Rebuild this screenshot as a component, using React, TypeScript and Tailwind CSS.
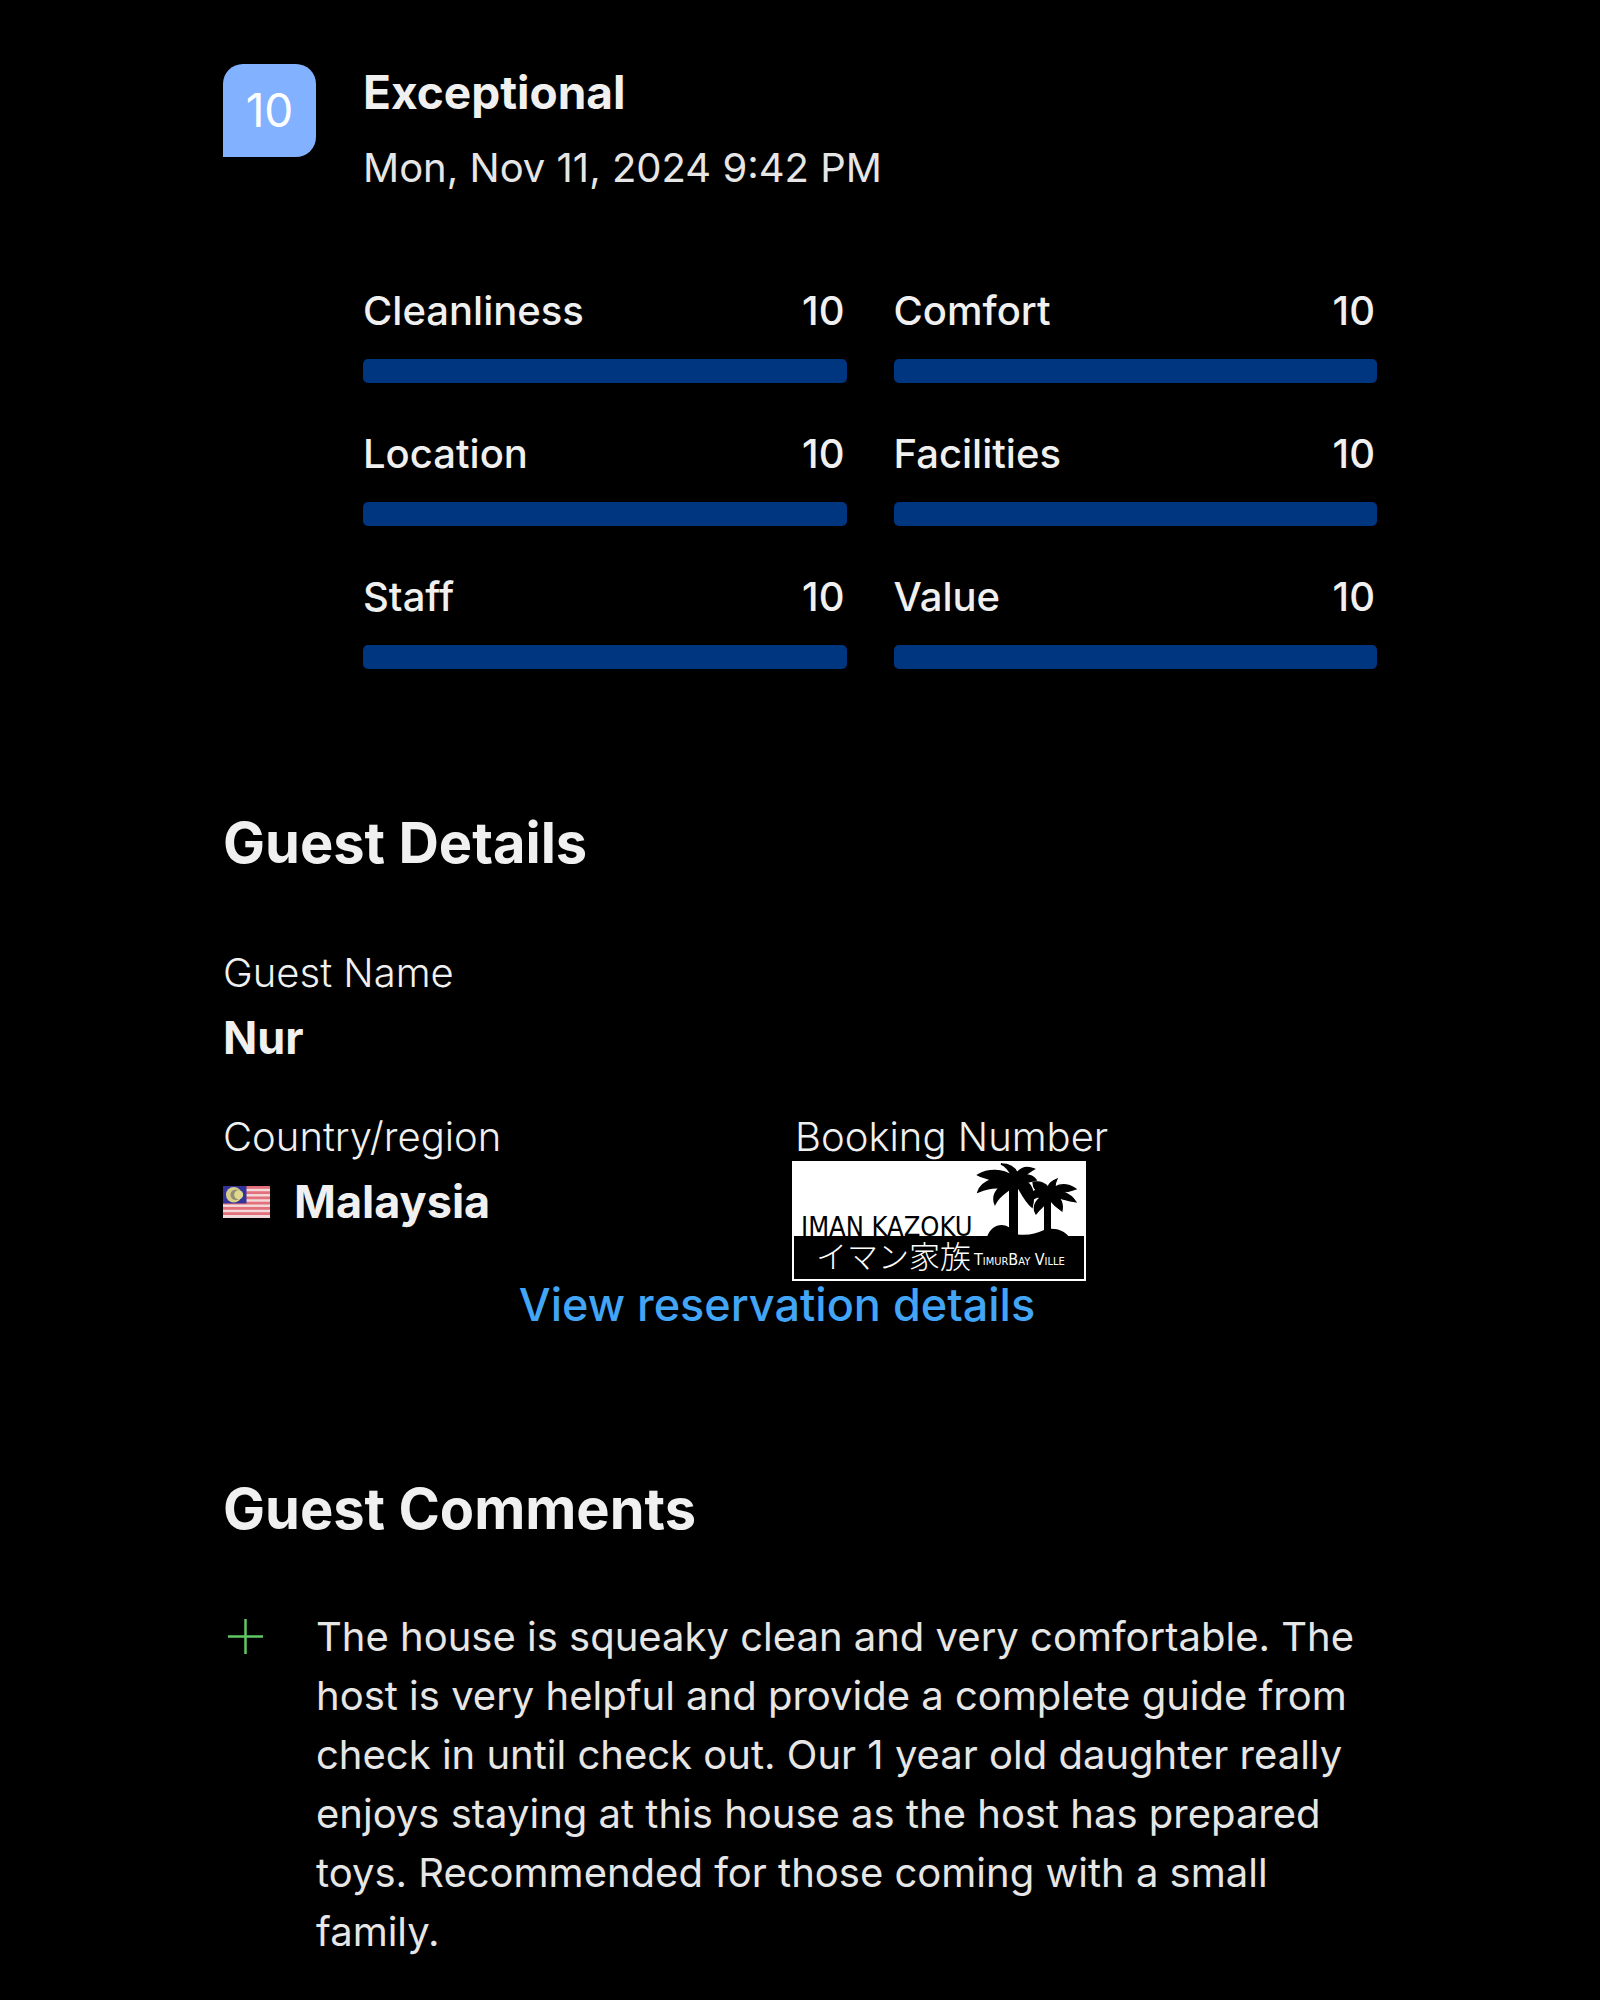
const ratings = [
  { label: "Cleanliness", score: 10 },
  { label: "Comfort", score: 10 },
  { label: "Location", score: 10 },
  { label: "Facilities", score: 10 },
  { label: "Staff", score: 10 },
  { label: "Value", score: 10 },
];

const MalaysiaFlag = () => (
  <svg viewBox="0 0 48 33" preserveAspectRatio="none" className="w-[47px] h-8" role="img" aria-label="Flag of Malaysia">
    <rect width="48" height="33" fill="#f3dada" />
    {[0, 1, 2, 3, 4, 5].map((i) => (
      <rect key={i} y={i * 5.4} width="48" height="2.9" fill="#e2717c" />
    ))}
    <rect width="24" height="18" fill="#33339a" />
    <circle cx="11" cy="9" r="8" fill="#d9cf86" />
    <circle cx="13" cy="9" r="5.4" fill="#8f8c78" />
    <circle cx="16" cy="9" r="4.6" fill="#e0d88a" />
  </svg>
);

const PropertyLogo = () => (
  <svg viewBox="0 0 294 120" className="block w-[294px] h-[120px] -ml-[3px]" role="img" aria-label="Iman Kazoku">
    <rect width="294" height="120" fill="#fff" />
    <rect x="2" y="75" width="290" height="43" fill="#000" />
    {/* palms */}
    <path d="M217 76V24h9v52zM252 76V36h7v40z" fill="#000" />
    <path d="M195 76C200 61 216 60 223 73C235 75 243 73 252 69C262 66 272 69 277 76z" fill="#000" />
    <path d="M220 15C217 9 214 5 209 3C218 3 223 7 225 12C229 7 235 5 242 8C238 10 236 12 233 14C238 14 242 16 244 19C240 20 237 21 235 21C241 26 243 34 240 46C234 41 230 33 226 26C224 28 221 28 219 27C215 31 207 34 203 43C200 35 204 30 207 27C200 26 194 28 186 31C188 25 193 21 199 19C195 17 190 16 186 14C196 8 211 8 220 15z" fill="#000" stroke="#000" strokeWidth="1.6" />
    <path d="M256 26C257 22 260 20 265 18C263 22 263 24 263 26C270 22 278 24 284 28C279 30 275 31 271 31C277 33 281 36 284 41C277 40 271 38 267 37C270 40 271 44 270 50C264 46 260 42 257 38C255 43 249 46 244 53C240 46 244 40 249 36C245 36 240 38 238 42C235 36 239 31 244 29C242 27 241 25 241 21C248 20 253 22 256 26z" fill="#000" stroke="#000" strokeWidth="1.2" />
    <text x="9" y="75" fontFamily="'DejaVu Sans Condensed', sans-serif" fontSize="27" fill="#000">IMAN KAZOKU</text>
    <text x="24" y="107" fontFamily="'Noto Sans CJK JP', sans-serif" fontWeight="300" fontSize="31" fill="#fff">イマン家族</text>
    <text x="182" y="104" fontFamily="'DejaVu Sans Condensed', sans-serif" fontSize="16" fill="#fff" style={{ fontVariant: "small-caps" }}>TimurBay Ville</text>
  </svg>
);

const RatingBar = ({ label, score }: { label: string; score: number }) => (
  <div>
    <div className="flex justify-between pr-0.5 text-[40px] leading-[48px] font-medium">
      <span>{label}</span>
      <span>{score}</span>
    </div>
    <div className="mt-6 h-6">
      <div className="h-full rounded-[5px] bg-[#003580]" style={{ width: `${score * 10}%` }}></div>
    </div>
  </div>
);

export default function App() {
  return (
    <main className="min-h-screen bg-black px-[223px] pt-16 pb-10 text-[#f0f0f0] font-['Inter',sans-serif]">
      {/* Score */}
      <header className="flex items-start gap-[47px]">
        <div className="flex h-[93px] w-[93px] shrink-0 items-center justify-center rounded-[20px] rounded-bl-none bg-[#82b1ff] text-[46px] text-white">
          10
        </div>
        <div className="flex-1">
          <h1 className="text-[46px] leading-[56px] font-bold">Exceptional</h1>
          <p className="mt-6 text-[40px] leading-[48px] text-[#e6e6e6]">Mon, Nov 11, 2024 9:42 PM</p>
          <div className="mt-[95px] grid grid-cols-2 gap-[47px]">
            {ratings.map((rating) => (
              <RatingBar key={rating.label} label={rating.label} score={rating.score} />
            ))}
          </div>
        </div>
      </header>

      {/* Guest Details */}
      <section className="mt-[138px]">
        <h2 className="text-[56px] leading-[72px] font-bold">Guest Details</h2>
        <dl className="mt-[70px] grid grid-cols-[572px_1fr] gap-y-[47px]">
          <div className="col-span-2">
            <dt className="text-[40px] leading-[48px] font-light">Guest Name</dt>
            <dd className="mt-[13px] text-[45px] leading-[56px] font-bold">Nur</dd>
          </div>
          <div>
            <dt className="text-[40px] leading-[48px] font-light">Country/region</dt>
            <dd className="mt-[13px] flex items-center gap-6 text-[45px] leading-[56px] font-bold">
              <MalaysiaFlag />
              Malaysia
            </dd>
          </div>
          <div>
            <dt className="text-[40px] leading-[48px] font-light">Booking Number</dt>
            <dd>
              <PropertyLogo />
            </dd>
          </div>
        </dl>
        <div className="pr-[46px] text-center text-[45px] leading-[48px] font-medium">
          <a href="#reservation" className="text-[#42a5f5]">View reservation details</a>
        </div>
      </section>

      {/* Guest Comments */}
      <section className="mt-36">
        <h2 className="text-[56px] leading-[72px] font-bold">Guest Comments</h2>
        <div className="mt-[62px] flex items-start gap-[47px]">
          <svg viewBox="0 0 46 58" className="h-[58px] w-[46px] shrink-0" aria-hidden="true">
            <path d="M5 29.5H40M22.5 12V47" stroke="#5fc763" strokeWidth="2.5" fill="none" />
          </svg>
          <p className="text-[40px] leading-[59px] text-[#e6e6e6]">
            The house is squeaky clean and very comfortable. The host is very helpful and provide a complete guide
            from check in until check out. Our 1 year old daughter really enjoys staying at this house as the host
            has prepared toys. Recommended for those coming with a small family.
          </p>
        </div>
      </section>
    </main>
  );
}
